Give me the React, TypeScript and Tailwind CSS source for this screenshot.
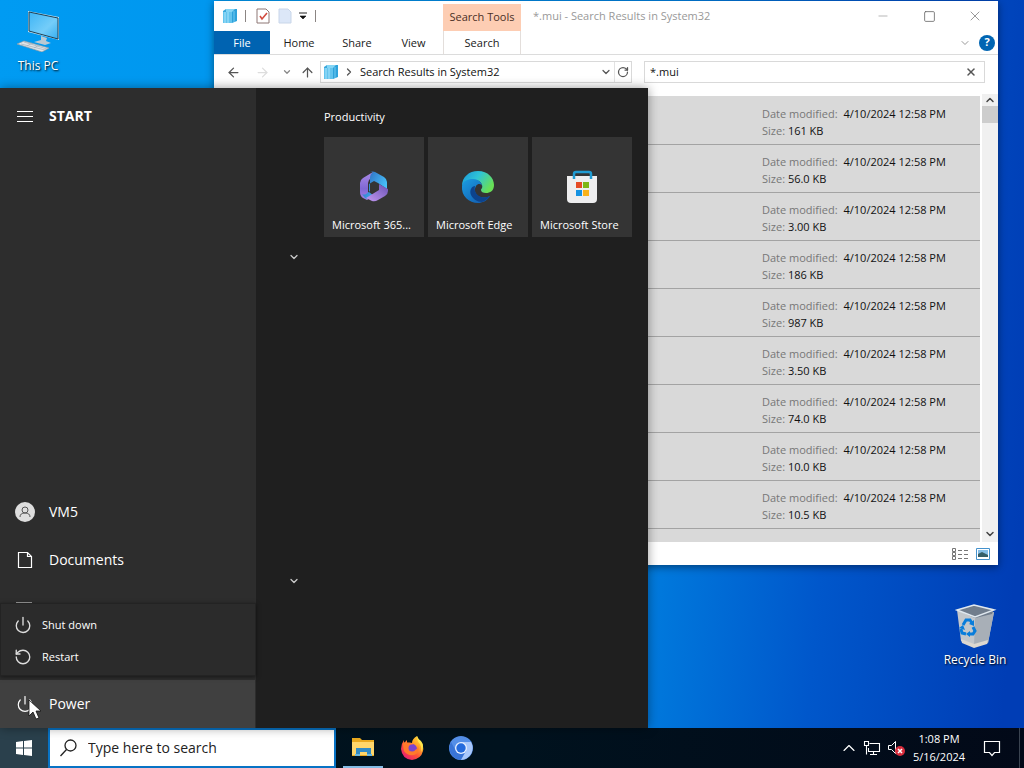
import type { ReactNode } from 'react'
import {
    ArrowLeft, ArrowRight, ArrowUp, ChevronDown, ChevronRight, ChevronUp, Menu, Minus, Power, RotateCcw, RotateCw, Search, Square, X,
} from 'lucide-react'

const files = ['161 KB', '56.0 KB', '3.00 KB', '186 KB', '987 KB', '3.50 KB', '74.0 KB', '10.0 KB', '10.5 KB', null]

function ComputerIcon() {
    return (
        <svg width="44" height="44" viewBox="0 0 44 44" aria-hidden="true">
            <defs>
                <linearGradient id="screen" x1="0" y1="0" x2="1" y2="1">
                    <stop offset="0" stopColor="#3db4f5" />
                    <stop offset="0.6" stopColor="#74cdf9" />
                    <stop offset="1" stopColor="#35aef0" />
                </linearGradient>
            </defs>
            <path d="M12 3l31 6v23L12 24z" fill="#c6e3f2" />
            <path d="M13 4l29 6v21L13 23z" fill="url(#screen)" stroke="#1d4055" />
            <path d="M25 28l6 2-1 3 5 2-6 2-11-3 7-2z" fill="#b9c9d3" />
            <path d="M8 33l25 7-7 4-25-8z" fill="#dfe4e8" stroke="#8799a5" strokeWidth=".7" />
            <path d="M5 36l24 6M8 34l23 7M11 38l5-3M18 40l5-3" stroke="#a3afb8" strokeWidth=".7" />
        </svg>
    )
}

function RecycleBinIcon() {
    return (
        <svg width="44" height="46" viewBox="0 0 44 46" aria-hidden="true">
            <path d="M4 8l18 7 19-5-6 31-14 4-13-6z" fill="#c3c7cb" />
            <path d="M22 15l19-5-6 31-14 4z" fill="#a8afb7" />
            <path d="M4 8l17-5 20 4-2 5-17 4z" fill="#717d8c" />
            <path d="M4 8l17-5 20 5-19 7z" fill="none" stroke="#e0e8ef" strokeWidth="1.5" />
            <path d="M8 37l13 5 14-4-1 4-13 4-12-5z" fill="#ddd8d0" />
            <g fill="none" stroke="#087ddb" strokeWidth="3">
                <path d="M10 23l3-5h4l2 3" />
                <path d="M20 25l2 4-2 3h-4" />
                <path d="M13 32l-4-1-1-4" />
            </g>
            <path d="M21 18v6l-5-2zM17 29v6l-4-3zM6 26l4-3 2 5z" fill="#087ddb" />
        </svg>
    )
}

function SearchFolderIcon() {
    return (
        <svg width="16" height="16" viewBox="0 0 16 16" aria-hidden="true" className="shrink-0">
            <path d="M1 3l3-2v12l-3 2z" fill="#3aa8dc" />
            <path d="M4 1h9v12H4z" fill="#83d5f5" />
            <path d="M1 4h9v11H1z" fill="#63c4ee" />
            <path d="M10 4l3-3h2v12l-5 2z" fill="#2ea2db" />
            <path d="M3 4v11M6 4v11" stroke="#a9e3fa" />
            <path d="M12 3v11" stroke="#70caf1" />
        </svg>
    )
}

function Microsoft365Icon() {
    return (
        <svg width="32" height="32" viewBox="0 0 32 32" aria-hidden="true">
            <defs>
                <linearGradient id="m1" x1="0" y1="0" x2="0" y2="1">
                    <stop offset="0" stopColor="#aa8ae8" />
                    <stop offset="0.6" stopColor="#8068d4" />
                    <stop offset="1" stopColor="#a683e8" />
                </linearGradient>
                <linearGradient id="m2" x1="0" y1="0" x2="1" y2="0.6">
                    <stop offset="0" stopColor="#2959b2" />
                    <stop offset="1" stopColor="#49c8ff" />
                </linearGradient>
                <linearGradient id="m3" x1="0" y1="1" x2="1" y2="0">
                    <stop offset="0" stopColor="#c49af2" />
                    <stop offset="1" stopColor="#6951b4" />
                </linearGradient>
            </defs>
            <path d="M15 1L5 7q-3 2-3 5v9q0 4 3 6l4 2 3-2-2-4V12q0-3 3-5z" fill="url(#m1)" />
            <path d="M15 1q-3 2-3 6v13l-4 3q-2 1-4 0l3 4q3 2 6 0l3-2-5-4v-8l5-3 4 2 9 6V11q0-3-3-5l-9-5q-2-1-5 0z" fill="url(#m2)" />
            <path d="M21 13v6l-13 8 6 3q3 1 6-1l7-4q3-2 3-5v-2z" fill="url(#m3)" />
        </svg>
    )
}

function EdgeIcon() {
    return (
        <svg width="34" height="34" viewBox="0 0 34 34" aria-hidden="true">
            <defs>
                <linearGradient id="e1" x1="0" y1="0" x2="1" y2="0.5">
                    <stop offset="0" stopColor="#1994d9" />
                    <stop offset="0.5" stopColor="#2fc4d7" />
                    <stop offset="1" stopColor="#68df57" />
                </linearGradient>
                <linearGradient id="e2" x1="0" y1="0" x2="1" y2="1">
                    <stop offset="0" stopColor="#1b9de2" />
                    <stop offset="1" stopColor="#1154a8" />
                </linearGradient>
            </defs>
            <path d="M1 16C1 7 8 1 17 1c10 0 16 7 16 14 0 6-4 8-8 8-3 0-5-1-5-3 0-1 2-2 1-5-1-4-5-5-8-5C7 10 2 13 1 16z" fill="url(#e1)" />
            <path d="M1 16c1-5 5-7 11-7 6 0 9 4 9 7 0-2-4-3-6 0-4 7 3 15 14 10-3 5-8 7-12 7C8 33 0 26 1 16z" fill="url(#e2)" />
            <path d="M14 16c-3 0-6 4-4 9 2 4 6 7 11 7 3-1 6-3 8-6-8 4-17-1-15-10z" fill="#0d438c" />
        </svg>
    )
}

function StoreIcon() {
    return (
        <svg width="32" height="34" viewBox="0 0 32 34" aria-hidden="true">
            <path d="M1 6h30v23q0 4-4 4H5q-4 0-4-4z" fill="#eeeeef" />
            <path d="M8 9V4q0-2 2-2h13q2 0 2 2v5" fill="none" stroke="#209cd3" strokeWidth="2.5" />
            <path d="M10 12h6v6h-6z" fill="#e54b25" />
            <path d="M17 12h6v6h-6z" fill="#7db616" />
            <path d="M10 20h6v6h-6z" fill="#1592e2" />
            <path d="M17 20h6v6h-6z" fill="#f9b21a" />
        </svg>
    )
}

function FolderIcon() {
    return (
        <svg width="24" height="24" viewBox="0 0 24 24" aria-hidden="true">
            <path d="M1 3h8l2 2h12v16H1z" fill="#e9a91f" />
            <path d="M1 7h22v13H1z" fill="#ffd66b" />
            <path d="M5 13h15v8h-4v-4H9v4H5z" fill="#318bc6" />
            <path d="M4 20h5M16 20h5" stroke="#6db8df" strokeWidth="2" />
        </svg>
    )
}

function FirefoxIcon() {
    return (
        <svg width="24" height="24" viewBox="0 0 24 24" aria-hidden="true">
            <defs>
                <linearGradient id="fox" x1="1" y1="0" x2="0.2" y2="1">
                    <stop offset="0" stopColor="#ffed46" />
                    <stop offset="0.35" stopColor="#ffa928" />
                    <stop offset="0.65" stopColor="#ff5038" />
                    <stop offset="1" stopColor="#e51b78" />
                </linearGradient>
            </defs>
            <path d="M17 0q1 4 4 6 3 4 2 9-2 8-11 9Q2 23 1 13q0-5 3-9v3l3-3v3q3-1 5 0 0-4 5-7z" fill="url(#fox)" />
            <circle cx="12" cy="13" r="5" fill="#7944cf" />
            <path d="M3 7q4-2 9 1 2 1 2 2-3 2-5 1 1 4 6 3 3-1 3-5 2 8-4 10-7 1-10-4-1-4-1-8z" fill="#ff792c" />
            <circle cx="12" cy="12" r="3.500" fill="#7944cf" />
            <path d="M17 0q0 5 3 8 2 4 1 8 4-6 0-11-3-2-4-5z" fill="#ffe64c" />
        </svg>
    )
}

function ChromiumIcon() {
    return (
        <svg width="24" height="24" viewBox="0 0 24 24" aria-hidden="true">
            <circle cx="12" cy="12" r="12" fill="#548fe8" />
            <path d="M2 6a12 12 0 0 0 10 18l5-9-10 0z" fill="#3974d6" />
            <path d="M12 6h10a12 12 0 0 1-10 18l5-9z" fill="#a9c8fb" />
            <circle cx="12" cy="12" r="6" fill="#e8f0ff" />
            <circle cx="12" cy="12" r="4.7" fill="#246bdd" />
        </svg>
    )
}

function Explorer() {
    return (
        <section aria-label="Search Results in System32" className="absolute top-px right-[26px] left-[214px] flex h-[564px] flex-col bg-white text-xs text-[#202020] shadow-[0_2px_8px_rgba(0,0,0,0.45)]">
            {/* Title bar */}
            <header className="flex h-[30px] items-center">
                <div className="flex w-[229px] items-center pl-2">
                    <SearchFolderIcon />
                    <span className="ml-[7px] h-3 w-px bg-[#8b8583]" />
                    <button aria-label="Properties" className="ml-2.5">
                        <svg width="14" height="16" viewBox="0 0 14 16">
                            <path d="M1 1h9l3 3v11H1z" fill="#fff" stroke="#8d7775" />
                            <path d="M4 8l2 3 5-6" fill="none" stroke="#d24b3f" strokeWidth="1.6" />
                        </svg>
                    </button>
                    <button aria-label="New folder" className="ml-2">
                        <svg width="14" height="16" viewBox="0 0 14 16">
                            <path d="M1 1h9l3 3v11H1z" fill="#dce7f8" stroke="#c9d6e9" />
                        </svg>
                    </button>
                    <button aria-label="Customize toolbar" className="ml-1.5">
                        <svg width="10" height="8" viewBox="0 0 10 8">
                            <path d="M1 1h8" stroke="#222" />
                            <path d="M2 4h6L5 7z" fill="#111" stroke="#111" strokeWidth=".6" />
                        </svg>
                    </button>
                    <span className="ml-[7px] h-3 w-px bg-[#8b8583]" />
                </div>
                <div className="mt-[3px] flex h-[27px] w-[78px] items-center justify-center bg-[#fdcdb3] text-[11px] text-[#4a3026]">Search Tools</div>
                <h1 className="pl-3 text-[11px] text-[#999]">*.mui - Search Results in System32</h1>
                <div className="ml-auto flex h-full text-[#999]">
                    <button aria-label="Minimize" className="flex w-[46px] items-center justify-center"><Minus size={14} strokeWidth={1.2} /></button>
                    <button aria-label="Maximize" className="flex w-[46px] items-center justify-center text-[#666]"><Square size={13} strokeWidth={1.5} /></button>
                    <button aria-label="Close" className="flex w-[46px] items-center justify-center"><X size={16} strokeWidth={1.5} /></button>
                </div>
            </header>

            {/* Ribbon tabs */}
            <div className="flex h-6 border-b border-[#dcdcdc] text-[11px]">
                <button className="w-14 bg-[#0063b1] pt-0.5 text-white">File</button>
                <button className="w-[58px] pt-0.5">Home</button>
                <button className="w-[58px] pt-0.5">Share</button>
                <button className="w-[57px] pt-0.5 pr-0.5">View</button>
                <button className="h-[23px] w-[78px] border-x border-[#e3dedb] pt-0.5">Search</button>
                <button aria-label="Expand the ribbon" className="ml-auto text-[#999]"><ChevronDown size={12} /></button>
                <button aria-label="Help" className="mx-[3px] ml-2 flex items-center">
                    <span className="flex size-4 items-center justify-center rounded-full bg-[#0065b3] font-bold text-white">?</span>
                </button>
            </div>

            {/* Address bar */}
            <div className="flex h-[39px] items-start pt-1.5 pr-[13px] pl-3 text-[#555]">
                <div className="flex h-[22px] w-[94px] shrink-0 items-center">
                    <button aria-label="Back"><ArrowLeft size={15} /></button>
                    <button aria-label="Forward" className="ml-3.5 text-[#ddd]"><ArrowRight size={15} /></button>
                    <button aria-label="Recent locations" className="ml-3 text-[#888]"><ChevronDown size={10} strokeWidth={3} /></button>
                    <button aria-label="Up" className="ml-2"><ArrowUp size={15} /></button>
                </div>
                <div className="flex h-[22px] w-[312px] shrink-0 items-center border border-[#d9d9d9] bg-white pl-0.5">
                    <SearchFolderIcon />
                    <ChevronRight size={12} strokeWidth={2.5} className="ml-1" />
                    <button className="ml-[5px] text-[11px] text-[#111]">Search Results in System32</button>
                    <button aria-label="Previous locations" className="mr-0.5 ml-auto"><ChevronDown size={12} strokeWidth={2.5} /></button>
                    <button aria-label="Refresh" className="h-full border-l border-[#e2e2e2] px-0.5"><RotateCw size={12} strokeWidth={2.5} /></button>
                </div>
                <div className="ml-3 flex h-[22px] min-w-0 flex-1 items-center border border-[#d9d9d9] bg-white px-[5px]">
                    <input aria-label="Search files" defaultValue="*.mui" className="min-w-0 flex-1 text-[11px] text-[#111] outline-none" />
                    <button aria-label="Clear search" className="mr-0.5"><X size={12} strokeWidth={3} /></button>
                </div>
            </div>

            {/* Results */}
            <div className="flex min-h-0 flex-1">
                <ul className="mt-0.5 mr-0.5 min-w-0 flex-1 overflow-hidden bg-[#d9d9d9] pt-px text-[11px] leading-[17px]">
                    {files.map((size, i) => (
                        <li key={i} className="flex h-12 justify-end border-b border-[#a3a3a3] pt-2">
                            <div className="w-[218px] text-[#111]">
                                <p><span className="mr-[3px] text-[#777]">Date modified:</span> 4/10/2024 12:58 PM</p>
                                {size && <p><span className="text-[#777]">Size:</span> {size}</p>}
                            </div>
                        </li>
                    ))}
                </ul>
                <div className="flex w-4 flex-col items-center bg-[#f0f0f0] text-[#444]">
                    <button aria-label="Scroll up"><ChevronUp size={12} strokeWidth={3} /></button>
                    <div className="h-[17px] w-full bg-[#cdcdcd]" />
                    <button aria-label="Scroll down" className="mt-auto pb-0.5"><ChevronDown size={12} strokeWidth={3} /></button>
                </div>
            </div>
            <footer className="flex h-[23px] shrink-0 items-center justify-end gap-2 pr-2">
                <button aria-label="Details view">
                    <svg width="16" height="14" viewBox="0 0 16 14" fill="none" stroke="#777">
                        <path d="M.5 1.5h3v3h-3zM.5 5.500h3v3h-3zM.5 9.500h3v3h-3z" />
                        <path d="M6 3.500h4m2 0h4M6 7.500h4m2 0h4M6 11.500h4m2 0h4" />
                    </svg>
                </button>
                <button aria-label="Large icons view">
                    <svg width="14" height="12" viewBox="0 0 14 12">
                        <path d="M.5.5h13v11H.5z" fill="#fff" stroke="#4592cd" />
                        <path d="M2 2h10v5H2z" fill="#83bde6" />
                        <path d="M2 6l4-2 6 3v2H2z" fill="#365f68" />
                    </svg>
                </button>
            </footer>
        </section>
    )
}

function NavItem({ icon, label, className = '' }: { icon: ReactNode; label: string; className?: string }) {
    return (
        <button className={`flex h-12 shrink-0 items-center text-left ${className}`}>
            <span className="flex w-[49px] justify-center">{icon}</span>
            {label}
        </button>
    )
}

function Tile({ icon, label }: { icon: ReactNode; label: string }) {
    return (
        <button className="relative flex size-[100px] items-center justify-center bg-[#343434]">
            {icon}
            <span className="absolute bottom-1 left-2 text-[11px] whitespace-nowrap">{label}</span>
        </button>
    )
}

function StartMenu() {
    return (
        <section aria-label="Start" className="absolute bottom-0 left-0 flex h-[640px] w-[648px] bg-[#1f1f1f] text-white shadow-[0_0_10px_rgba(0,0,0,0.4)]">
            <nav className="relative flex w-64 flex-col bg-[#2d2d2d] pt-1 text-sm">
                <NavItem
                    className="font-bold"
                    label="START"
                    icon={<svg width="16" height="11" viewBox="0 0 16 11" stroke="#fff"><path d="M0 .5h16M0 5.500h16M0 10.500h16" /></svg>}
                />
                <NavItem
                    className="mt-auto"
                    label="VM5"
                    icon={
                        <svg width="20" height="20" viewBox="0 0 20 20">
                            <circle cx="10" cy="10" r="10" fill="#dedede" />
                            <circle cx="10" cy="8" r="3" fill="none" stroke="#555" />
                            <path d="M5 15q0-4 5-4t5 4" fill="none" stroke="#555" />
                        </svg>
                    }
                />
                <NavItem
                    label="Documents"
                    icon={
                        <svg width="16" height="18" viewBox="0 0 16 18" fill="none" stroke="#fff" strokeWidth="1.2">
                            <path d="M1.500 1.500h9l4 4v11h-13zM10.500 1.500v4h4" />
                        </svg>
                    }
                />
                <button aria-label="Pictures" className="flex h-24 items-start pt-[18px] pl-4">
                    <svg width="16" height="12" viewBox="0 0 16 12" fill="none" stroke="#999"><path d="M0 .5h16v11H0z" /></svg>
                </button>
                <NavItem icon={<Power size={18} strokeWidth={1.6} />} label="Power" className="border-r border-[#2d2d2d] bg-[#404040]" />

                <div className="absolute bottom-[52px] left-0 flex w-full flex-col border border-[#232323] bg-[#2b2b2b] pt-[5px] pb-0.5 text-[11px] shadow-[0_1px_4px_rgba(0,0,0,0.5)]">
                    <button className="flex h-8 items-center gap-2.5 pl-[13px]"><Power size={18} strokeWidth={1.8} className="text-[#ddd]" />Shut down</button>
                    <button className="flex h-8 items-center gap-2.5 pl-[13px]"><RotateCcw size={18} strokeWidth={1.8} className="text-[#ddd]" />Restart</button>
                </div>

                {/* Pointer */}
                <svg width="14" height="21" viewBox="0 0 14 21" className="absolute bottom-2 left-7">
                    <path d="M1 1v16l4-4 3 7 3-1-3-7h5z" fill="#fff" stroke="#111" strokeWidth=".8" />
                </svg>
            </nav>
            <div className="flex w-[68px] flex-col items-center pt-[163px] pl-2 text-[#ccc]">
                <button aria-label="Collapse group" className="h-3"><ChevronDown size={12} strokeWidth={2.5} /></button>
                <button aria-label="Expand group" className="mt-[312px] h-3"><ChevronDown size={12} strokeWidth={2.5} /></button>
            </div>
            <div className="pt-5">
                <h2 className="text-[11px] leading-[18px]">Productivity</h2>
                <div className="mt-[11px] flex gap-1">
                    <Tile icon={<Microsoft365Icon />} label="Microsoft 365..." />
                    <Tile icon={<EdgeIcon />} label="Microsoft Edge" />
                    <Tile icon={<StoreIcon />} label="Microsoft Store" />
                </div>
            </div>
        </section>
    )
}

function Taskbar() {
    return (
        <footer className="flex h-10 shrink-0 bg-linear-to-r from-[#00131d] via-[#00121e] to-[#020918] text-white">
            <button aria-label="Start" className="flex w-12 items-center justify-center bg-[#2a404c]">
                <svg width="16" height="16" viewBox="0 0 16 16" fill="#fff">
                    <path d="M0 2l7-1v6.500H0zM8 .9L16 0v7.500H8zM0 8.500h7V15l-7-1zM8 8.500h8V16l-8-1z" />
                </svg>
            </button>
            <label className="flex w-72 items-center border-2 border-[#0873c5] bg-white pl-2.5 text-[#222]">
                <svg width="18" height="18" viewBox="0 0 18 18" fill="none" stroke="#222" strokeWidth="1.300">
                    <circle cx="10.500" cy="6.500" r="5.500" />
                    <path d="M6.500 10.500L.5 17" />
                </svg>
                <input aria-label="Search" placeholder="Type here to search" className="ml-2.5 min-w-0 flex-1 text-sm outline-none placeholder:text-[#222]" />
            </label>
            <button aria-label="File Explorer" className="ml-[7px] flex w-10 items-center justify-center border-b-2 border-[#84bce4]"><FolderIcon /></button>
            <button aria-label="Firefox" className="ml-1 flex w-[49px] items-center justify-center"><FirefoxIcon /></button>
            <button aria-label="Chromium" className="flex w-[49px] items-center justify-center"><ChromiumIcon /></button>

            <div className="ml-auto flex items-center">
                <button aria-label="Show hidden icons"><ChevronUp size={20} strokeWidth={1.4} /></button>
                <button aria-label="Network" className="ml-1">
                    <svg width="18" height="16" viewBox="0 0 18 16" fill="none" stroke="#fff" strokeWidth="1.1">
                        <path d="M6.500 3.500h10v8h-11V8M10.500 11.500v3M7 14.500h7M1.500 1.500h4v4h-4zM3.500 5.500v9" />
                    </svg>
                </button>
                <button aria-label="Volume muted" className="ml-1.5">
                    <svg width="18" height="18" viewBox="0 0 18 18">
                        <path d="M1.500 6.500h3l4-4v12l-4-4h-3z" fill="none" stroke="#fff" />
                        <circle cx="13" cy="12" r="5" fill="#d72c3c" />
                        <path d="M11 10l4 4m0-4l-4 4" stroke="#fff" strokeWidth="1.500" />
                    </svg>
                </button>
                <button className="ml-1 w-[60px] text-center text-[11px] leading-[18px]">1:08 PM<br />5/16/2024</button>
                <button aria-label="Notifications" className="mr-[18px] ml-3.5">
                    <svg width="18" height="18" viewBox="0 0 18 18" fill="none" stroke="#fff" strokeWidth="1.200">
                        <path d="M1.500 2.500h15v11h-5l-2.500 3-2.500-3h-5z" />
                    </svg>
                </button>
                <span className="mr-1 h-full w-px bg-[#3a4350]" />
            </div>
        </footer>
    )
}

export default function App() {
    return (
        <div className="flex h-screen flex-col overflow-hidden font-['Open_Sans','Noto_Sans',sans-serif]">
            <main className="relative min-h-0 flex-1 bg-[linear-gradient(95deg,#009bf2_0%,#0096ee_25%,#0080e0_62%,#0057cb_80%,#003db5_98%)]">
                <button className="absolute top-2 left-0 flex w-[76px] flex-col items-center text-xs text-white [text-shadow:1px_1px_2px_#000]">
                    <ComputerIcon />
                    <span className="mt-1.5">This PC</span>
                </button>
                <button className="absolute right-3 bottom-[60px] flex w-[74px] flex-col items-center text-xs whitespace-nowrap text-white [text-shadow:1px_1px_2px_#000]">
                    <RecycleBinIcon />
                    <span className="mt-1">Recycle Bin</span>
                </button>
                <Explorer />
                <StartMenu />
            </main>
            <Taskbar />
        </div>
    )
}
